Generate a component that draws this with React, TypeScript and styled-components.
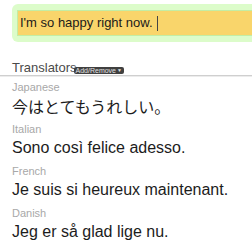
import React from "react";
import styled, { createGlobalStyle } from "styled-components";

const Global = createGlobalStyle`
  html, body { margin: 0; padding: 0; background: #fff; overflow: hidden; }
  body { font-family: "Liberation Sans", Arial, sans-serif; }
`;

const Page = styled.div`
  width: 252px;
  height: 251px;
  overflow: hidden;
  display: flex;
  flex-direction: column;
`;

const InputShell = styled.div`
  margin: 4px -20px 0 12px;
  padding: 6px 5px;
  background: #dcfcca;
  border-radius: 6px;
`;

const InputField = styled.div`
  height: 24px;
  border: 1px solid #c3eda4;
  background: #f9d56b;
  padding-left: 2px;
  display: flex;
  align-items: center;
  font-size: 13px;
  line-height: 24px;
  color: #1a1a1a;
  white-space: nowrap;
`;

const Caret = styled.span`
  display: inline-block;
  width: 1px;
  height: 15px;
  background: #444;
  margin-left: 4px;
`;

const Heading = styled.div`
  margin-top: 19px;
  padding-left: 12px;
  display: flex;
  align-items: flex-end;
  border-bottom: 1px solid #cfcfcf;
  box-shadow: 0 1px 0 #ececec;
  height: 14px;
`;

const HeadingText = styled.span`
  font-size: 13px;
  line-height: 14px;
  color: #4a4a4a;
`;

const Badge = styled.span`
  display: inline-flex;
  align-items: center;
  gap: 1px;
  height: 7px;
  margin: 0 0 1px -3px;
  padding: 0 2px;
  background: #404040;
  border-radius: 2px;
  color: #e0e0e0;
  font-size: 7px;
  line-height: 7px;
  white-space: nowrap;
`;

const Arrow = styled.span`
  font-size: 5px;
`;

const List = styled.div`
  padding: 4px 0 0 12px;
  display: flex;
  flex-direction: column;
`;

const Entry = styled.div`
  display: flex;
  flex-direction: column;
  margin-bottom: 6px;
`;

const Lang = styled.div`
  font-size: 11px;
  line-height: 14px;
  color: #a8a8a8;
`;

const Translation = styled.div<{ $cjk?: boolean }>`
  margin-top: 2px;
  font-size: 16px;
  line-height: 20px;
  color: #1c1c1c;
  white-space: nowrap;
  font-family: ${(p) =>
    p.$cjk
      ? '"Noto Sans CJK JP", "Liberation Sans", sans-serif'
      : '"Liberation Sans", Arial, sans-serif'};
`;

const items = [
  { lang: "Japanese", text: "今はとてもうれしい。", cjk: true },
  { lang: "Italian", text: "Sono così felice adesso." },
  { lang: "French", text: "Je suis si heureux maintenant." },
  { lang: "Danish", text: "Jeg er så glad lige nu." },
];

export default function App() {
  return (
    <Page>
      <Global />
      <InputShell>
        <InputField>
          I'm so happy right now.
          <Caret />
        </InputField>
      </InputShell>
      <Heading>
        <HeadingText>Translators</HeadingText>
        <Badge>
          Add/Remove<Arrow>▼</Arrow>
        </Badge>
      </Heading>
      <List>
        {items.map((it) => (
          <Entry key={it.lang}>
            <Lang>{it.lang}</Lang>
            <Translation $cjk={it.cjk}>{it.text}</Translation>
          </Entry>
        ))}
      </List>
    </Page>
  );
}
